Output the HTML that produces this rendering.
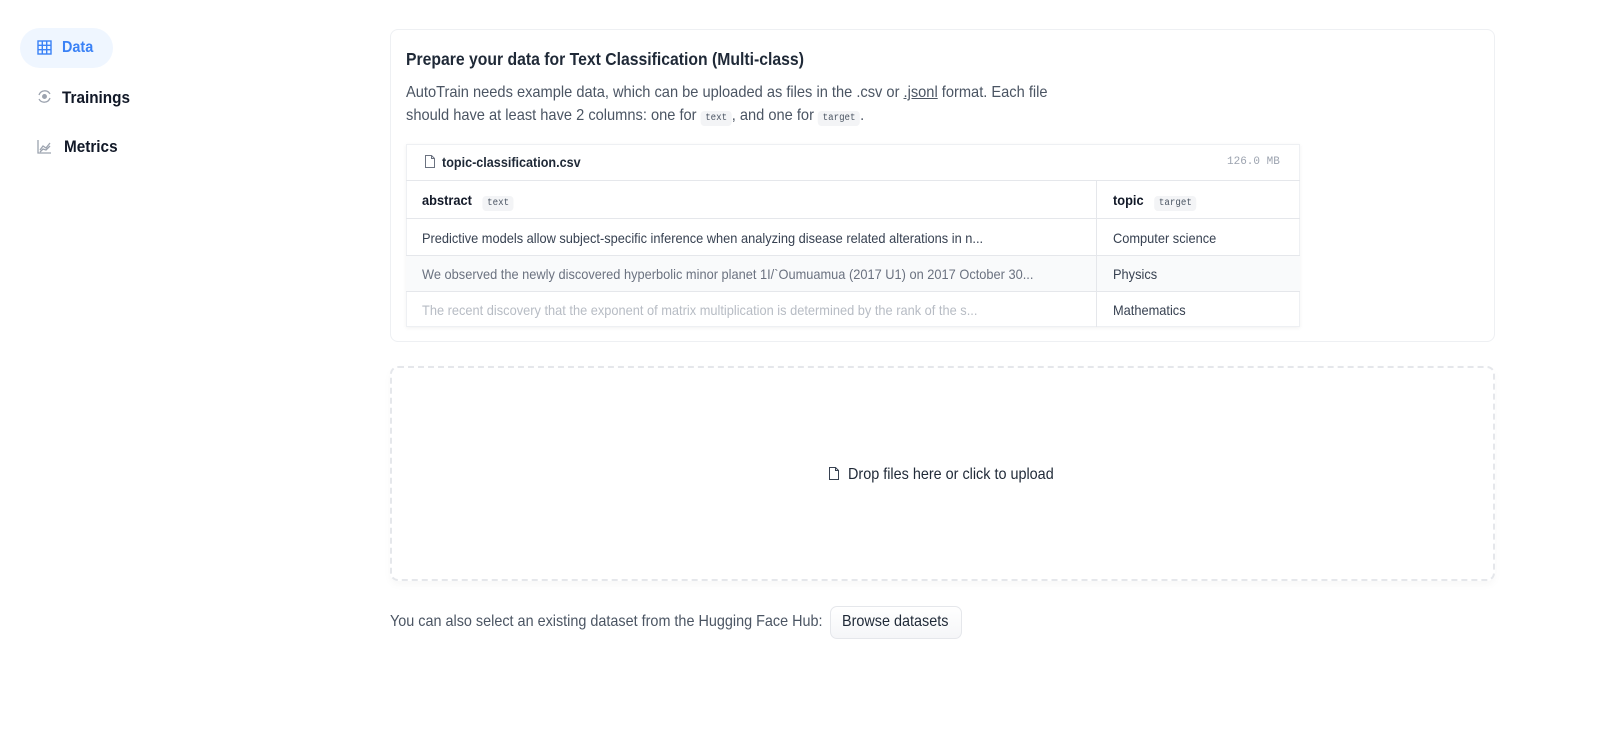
<!DOCTYPE html>
<html><head><meta charset="utf-8"><style>
*{box-sizing:border-box;margin:0;padding:0}
body{width:1599px;height:747px;background:#fff;font-family:"Liberation Sans",sans-serif;color:#374151;position:relative;overflow:hidden}
.a{position:absolute;white-space:nowrap}
.s{display:inline-block;transform-origin:left center;transform:scaleX(.9)}
code{font-family:"Liberation Mono",monospace;font-size:10px;background:#f3f4f6;border-radius:4px;padding:2px 5px;color:#4b5563}
.row{position:absolute;left:406px;width:894px;border-top:1px solid #e5e7eb;font-size:14px}
.row .c1{position:absolute;left:16px;top:0}
.row .c2{position:absolute;left:707px;top:0}
.row .s{transform:scaleX(.915)}
</style></head><body>
<div class="a" style="left:20px;top:28px;width:93px;height:40px;border-radius:20px;background:#eff6ff"></div>
<svg class="a" style="left:37px;top:40px" width="15" height="15" viewBox="0 0 15 15" fill="none" stroke="#3b82f6" stroke-width="1.4"><rect x="1" y="1" width="13" height="13"/><path d="M5.3 1v13M9.7 1v13M1 5.3h13M1 9.7h13"/></svg>
<div class="a" style="left:62px;top:39px;font-size:16px;font-weight:bold;color:#3b82f6"><span class="s">Data</span></div>
<svg class="a" style="left:37px;top:89px" width="15" height="15" viewBox="0 0 15 15" fill="none" stroke="#9ca3af" stroke-width="1.3"><path d="M2 6a6 6 0 0 1 11-1M13 9a6 6 0 0 1-11 1"/><circle cx="7.5" cy="7.5" r="1.8" fill="#9ca3af"/></svg>
<div class="a" style="left:62px;top:88px;font-size:17px;font-weight:bold;color:#111827"><span class="s">Trainings</span></div>
<svg class="a" style="left:37px;top:139px" width="15" height="15" viewBox="0 0 15 15" fill="none" stroke="#9ca3af" stroke-width="1.3"><path d="M1 1v13h13M3 11l3-4 3 2 4-5M3 13l3-3 3 1 4-4"/></svg>
<div class="a" style="left:64px;top:137px;font-size:17px;font-weight:bold;color:#111827"><span class="s">Metrics</span></div>

<div class="a" style="left:390px;top:29px;width:1105px;height:313px;border:1px solid #eef0f3;border-radius:8px"></div>
<div class="a" style="left:406px;top:49px;font-size:17.5px;font-weight:bold;color:#1f2937"><span class="s">Prepare your data for Text Classification (Multi-class)</span></div>
<div class="a" style="left:406px;top:84px;font-size:16px;color:#4b5563"><span class="s" style="transform:scaleX(.915)">AutoTrain needs example data, which can be uploaded as files in the .csv or <u>.jsonl</u> format. Each file</span></div>
<div class="a" style="left:406px;top:107px;font-size:16px;color:#4b5563"><span class="s" style="transform:scaleX(.915)">should have at least have 2 columns: one for <code>text</code>, and one for <code>target</code>.</span></div>

<div class="a" style="left:406px;top:144px;width:894px;height:183px;border:1px solid #eef0f3;box-shadow:0 1px 4px rgba(0,0,0,.06)"></div>
<svg class="a" style="left:425px;top:155px" width="10" height="13" viewBox="0 0 10 13" fill="none" stroke="#6b7280"><path d="M.5.5h6l3 3v9h-9z M6.5.5v3h3"/></svg>
<div class="a" style="left:442px;top:154px;font-size:14px;font-weight:bold;color:#1f2937"><span class="s">topic-classification.csv</span></div>
<div class="a" style="left:1227px;top:156px;font-size:11px;font-family:'Liberation Mono',monospace;color:#9ca3af">126.0 MB</div>
<div class="row" style="top:180px;height:38px"><div class="c1" style="top:11px;font-weight:bold;color:#111827"><span class="s">abstract &nbsp; <code style="font-weight:normal">text</code></span></div><div class="c2" style="top:11px;font-weight:bold;color:#111827"><span class="s">topic &nbsp; <code style="font-weight:normal">target</code></span></div></div>
<div class="row" style="top:218px;height:37px"><div class="c1" style="top:11px;color:#374151"><span class="s">Predictive models allow subject-specific inference when analyzing disease related alterations in n...</span></div><div class="c2" style="top:11px"><span class="s">Computer science</span></div></div>
<div class="row" style="top:255px;height:36px;background:#f9fafb"><div class="c1" style="top:10px;color:#6b7280"><span class="s">We observed the newly discovered hyperbolic minor planet 1I/`Oumuamua (2017 U1) on 2017 October 30...</span></div><div class="c2" style="top:10px"><span class="s">Physics</span></div></div>
<div class="row" style="top:291px;height:36px"><div class="c1" style="top:10px;color:#b7bcc4"><span class="s">The recent discovery that the exponent of matrix multiplication is determined by the rank of the s...</span></div><div class="c2" style="top:10px"><span class="s">Mathematics</span></div></div>
<div class="a" style="left:1096px;top:180px;width:1px;height:147px;background:#e5e7eb"></div>

<div class="a" style="left:390px;top:366px;width:1105px;height:215px;border:2px dashed #e5e7eb;border-radius:8px;box-shadow:0 4px 8px rgba(0,0,0,.03)"></div>
<svg class="a" style="left:829px;top:467px" width="10" height="13" viewBox="0 0 10 13" fill="none" stroke="#374151"><path d="M.5.5h6l3 3v9h-9z M6.5.5v3h3"/></svg>
<div class="a" style="left:848px;top:466px;font-size:16px;color:#1f2937"><span class="s">Drop files here or click to upload</span></div>

<div class="a" style="left:390px;top:613px;font-size:16px;color:#4b5563"><span class="s">You can also select an existing dataset from the Hugging Face Hub:</span></div>
<div class="a" style="left:830px;top:606px;width:132px;height:33px;border:1px solid #e5e7eb;border-radius:7px;background:linear-gradient(#fff,#f5f6f8)"></div>
<div class="a" style="left:842px;top:613px;font-size:16px;color:#1f2937"><span class="s">Browse datasets</span></div>
</body></html>
